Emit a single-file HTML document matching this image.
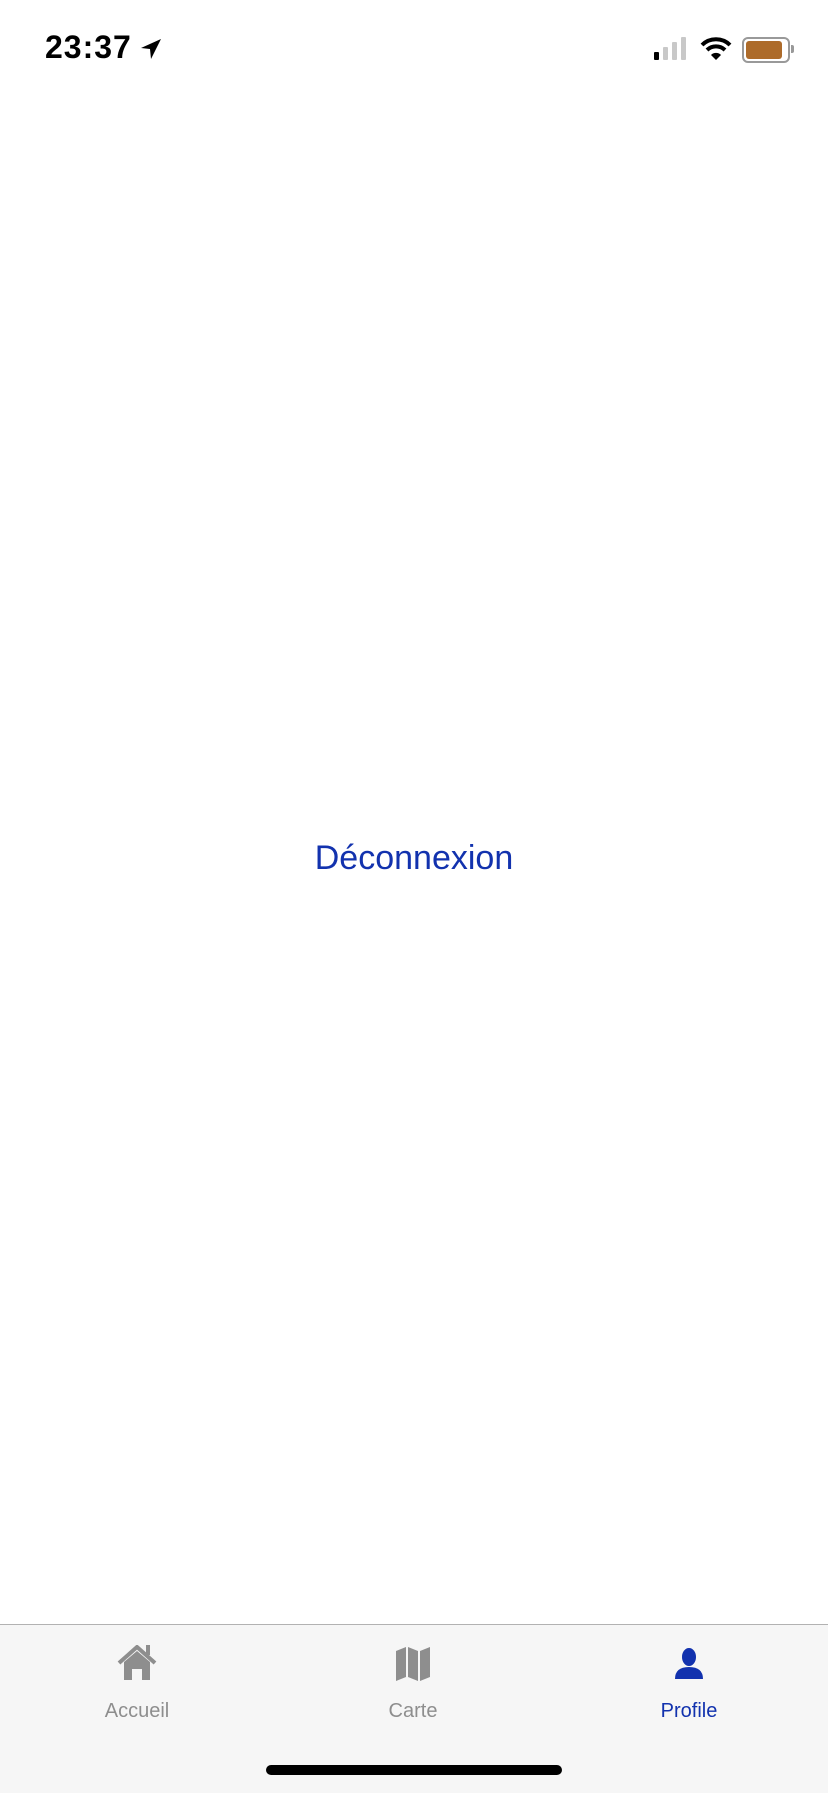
<!DOCTYPE html>
<html><head><meta charset="utf-8"><style>
body{margin:0;width:828px;height:1792px;position:relative;background:#fff;font-family:"Liberation Sans",sans-serif;overflow:hidden}
.abs{position:absolute}
.tab{position:absolute;top:1624px;left:0;width:828px;height:168px;background:#f6f6f6;border-top:1px solid #b2b2b2}
.lbl{position:absolute;top:1700px;font-size:20px;color:#8e8e8e;width:200px;text-align:center}
</style></head><body>
<div class="abs" style="left:45px;top:29px;font-size:32px;font-weight:600;letter-spacing:1px">23:37</div>
<svg class="abs" style="left:139px;top:37px" width="24" height="24" viewBox="0 0 24 24"><path d="M22 2 L2 11 L11 12 L12 22 Z" fill="#000"/></svg>
<svg class="abs" style="left:652px;top:36px" width="40" height="26"><rect x="2" y="16" width="5" height="8" rx="1" fill="#000"/><rect x="11" y="11" width="5" height="13" rx="1" fill="#c8c8c8"/><rect x="20" y="6" width="5" height="18" rx="1" fill="#c8c8c8"/><rect x="29" y="1" width="5" height="23" rx="1" fill="#c8c8c8"/></svg>
<svg class="abs" style="left:700px;top:36px" width="32" height="26" viewBox="0 0 32 26"><path d="M2 9 A20 20 0 0 1 30 9" stroke="#000" stroke-width="4" fill="none"/><path d="M7 14 A13 13 0 0 1 25 14" stroke="#000" stroke-width="4" fill="none"/><path d="M11 19 L16 24 L21 19 A7 7 0 0 0 11 19Z" fill="#000"/></svg>
<div class="abs" style="left:742px;top:37px;width:44px;height:22px;border:2px solid #999;border-radius:6px"></div>
<div class="abs" style="left:746px;top:41px;width:36px;height:18px;background:#ad6b2a;border-radius:3px"></div>
<div class="abs" style="left:791px;top:45px;width:3px;height:8px;background:#999;border-radius:0 2px 2px 0"></div>
<div class="abs" style="left:0;width:828px;top:839px;text-align:center;font-size:34px;color:#1232ae">Déconnexion</div>
<div class="tab"></div>
<svg class="abs" style="left:117px;top:1645px" width="40" height="36" viewBox="0 0 40 36"><path d="M2 18 L20 2 L38 18" stroke="#8e8e8e" stroke-width="4" fill="none"/><rect x="29" y="0" width="4" height="10" fill="#8e8e8e"/><path d="M7 17 L20 6 L33 17 V35 H25 V24 H15 V35 H7Z" fill="#8e8e8e"/></svg>
<svg class="abs" style="left:395px;top:1647px" width="36" height="34" viewBox="0 0 36 34"><path d="M1 4 L11 0 V30 L1 34Z M13 0 L23 4 V34 L13 30Z M25 4 L35 0 V30 L25 34Z" fill="#8e8e8e"/></svg>
<svg class="abs" style="left:674px;top:1648px" width="30" height="32" viewBox="0 0 30 32"><ellipse cx="15" cy="9" rx="7" ry="9" fill="#1232ae"/><path d="M1 31 Q1 19 15 19 Q29 19 29 31Z" fill="#1232ae"/></svg>
<div class="lbl" style="left:37px">Accueil</div>
<div class="lbl" style="left:313px">Carte</div>
<div class="lbl" style="left:589px;color:#1232ae">Profile</div>
<div class="abs" style="left:266px;top:1765px;width:296px;height:10px;background:#000;border-radius:5px"></div>
</body></html>
